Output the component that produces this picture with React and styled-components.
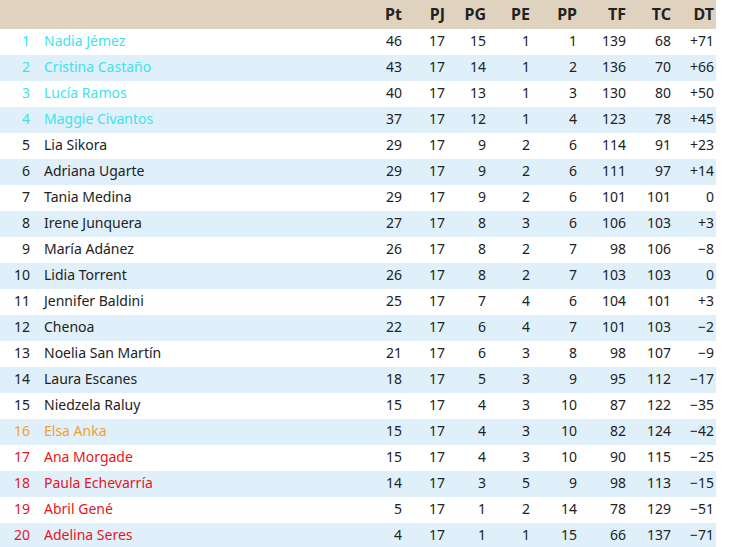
import React from "react";
import styled, { createGlobalStyle } from "styled-components";

const rows = [
  ["Nadia Jémez", 46, 17, 15, 1, 1, 139, 68, "+71", "top"],
  ["Cristina Castaño", 43, 17, 14, 1, 2, 136, 70, "+66", "top"],
  ["Lucía Ramos", 40, 17, 13, 1, 3, 130, 80, "+50", "top"],
  ["Maggie Civantos", 37, 17, 12, 1, 4, 123, 78, "+45", "top"],
  ["Lia Sikora", 29, 17, 9, 2, 6, 114, 91, "+23"],
  ["Adriana Ugarte", 29, 17, 9, 2, 6, 111, 97, "+14"],
  ["Tania Medina", 29, 17, 9, 2, 6, 101, 101, "0"],
  ["Irene Junquera", 27, 17, 8, 3, 6, 106, 103, "+3"],
  ["María Adánez", 26, 17, 8, 2, 7, 98, 106, "−8"],
  ["Lidia Torrent", 26, 17, 8, 2, 7, 103, 103, "0"],
  ["Jennifer Baldini", 25, 17, 7, 4, 6, 104, 101, "+3"],
  ["Chenoa", 22, 17, 6, 4, 7, 101, 103, "−2"],
  ["Noelia San Martín", 21, 17, 6, 3, 8, 98, 107, "−9"],
  ["Laura Escanes", 18, 17, 5, 3, 9, 95, 112, "−17"],
  ["Niedzela Raluy", 15, 17, 4, 3, 10, 87, 122, "−35"],
  ["Elsa Anka", 15, 17, 4, 3, 10, 82, 124, "−42", "mid"],
  ["Ana Morgade", 15, 17, 4, 3, 10, 90, 115, "−25", "low"],
  ["Paula Echevarría", 14, 17, 3, 5, 9, 98, 113, "−15", "low"],
  ["Abril Gené", 5, 17, 1, 2, 14, 78, 129, "−51", "low"],
  ["Adelina Seres", 4, 17, 1, 1, 15, 66, 137, "−71", "low"],
];

const heads = ["Pt", "PJ", "PG", "PE", "PP", "TF", "TC", "DT"];
const widths = [45, 43, 41, 44, 47, 49, 45, 43];

const zoneColor = {
  top: "#3de3ec",
  mid: "#f0a030",
  low: "#e8141c",
};

const Global = createGlobalStyle`
  body {
    margin: 0;
    background: #fff;
    font-family: "Noto Sans", "DejaVu Sans", sans-serif;
  }
`;

const Table = styled.table`
  width: 716px;
  border-collapse: collapse;
  table-layout: fixed;
  font-size: 14px;
  line-height: 18px;
  color: #222;
`;

const HeadRow = styled.tr`
  background: #dfd3c0;
  height: 29px;
`;

const HeadCell = styled.th`
  padding: 0 2px 1px 0;
  text-align: right;
  font-weight: bold;
  font-size: 16px;
  color: #222;
`;

const Row = styled.tr`
  height: 26px;
  background: ${(p) => (p.$odd ? "#e0f0fb" : "#fff")};
  color: ${(p) => zoneColor[p.$zone] || "#222"};
`;

const Rank = styled.td`
  padding: 0 2px 2px 0;
  text-align: right;
`;

const Name = styled.td`
  padding: 0 0 2px 12px;
  text-align: left;
  white-space: nowrap;
`;

const Num = styled.td`
  padding: 0 2px 2px 0;
  text-align: right;
  color: #222;
`;

const App = () => {
  return (
    <>
      <Global />
      <Table>
        <colgroup>
          <col style={{ width: 32 }} />
          <col style={{ width: 327 }} />
          {widths.map((w, i) => (
            <col key={i} style={{ width: w }} />
          ))}
        </colgroup>
        <thead>
          <HeadRow>
            <HeadCell />
            <HeadCell />
            {heads.map((h) => (
              <HeadCell key={h}>{h}</HeadCell>
            ))}
          </HeadRow>
        </thead>
        <tbody>
          {rows.map((r, i) => (
            <Row key={r[0]} $odd={i % 2 === 1} $zone={r[9]}>
              <Rank>{i + 1}</Rank>
              <Name>{r[0]}</Name>
              {r.slice(1, 9).map((v, j) => (
                <Num key={j}>{v}</Num>
              ))}
            </Row>
          ))}
        </tbody>
      </Table>
    </>
  );
};

export default App;
